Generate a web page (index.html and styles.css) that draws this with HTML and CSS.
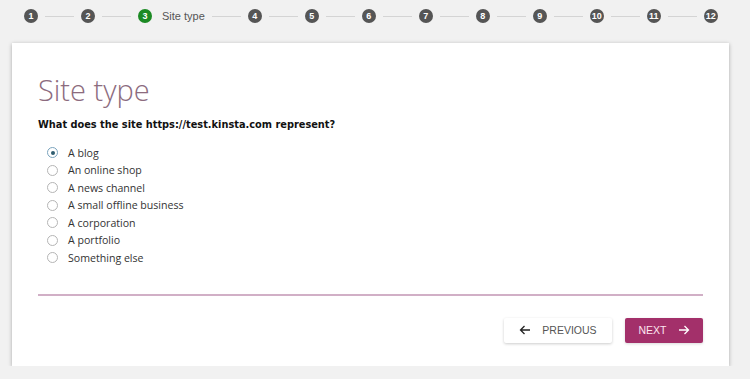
FILE: index.html
```html
<!DOCTYPE html>
<html lang="en">
<head>
    <meta charset="UTF-8">
    <meta name="viewport" content="width=device-width, initial-scale=1.0">
    <title>Site type</title>
    <link rel="stylesheet" href="styles.css">
</head>
<body>
    <!-- step bar -->
    <div class="steps">
        <span class="step">1</span><span class="line"></span>
        <span class="step">2</span><span class="line"></span>
        <span class="step step-active">3</span><span class="step-label">Site type</span><span class="line"></span>
        <span class="step">4</span><span class="line"></span>
        <span class="step">5</span><span class="line"></span>
        <span class="step">6</span><span class="line"></span>
        <span class="step">7</span><span class="line"></span>
        <span class="step">8</span><span class="line"></span>
        <span class="step">9</span><span class="line"></span>
        <span class="step">10</span><span class="line"></span>
        <span class="step">11</span><span class="line"></span>
        <span class="step">12</span>
    </div>

    <div class="card">
        <h1 class="title">Site type</h1>
        <p class="question">What does the site https://test.kinsta.com represent?</p>

        <ul class="options">
            <li class="option"><span class="radio radio-checked"></span>A blog</li>
            <li class="option"><span class="radio"></span>An online shop</li>
            <li class="option"><span class="radio"></span>A news channel</li>
            <li class="option"><span class="radio"></span>A small offline business</li>
            <li class="option"><span class="radio"></span>A corporation</li>
            <li class="option"><span class="radio"></span>A portfolio</li>
            <li class="option"><span class="radio"></span>Something else</li>
        </ul>

        <div class="divider"></div>

        <div class="actions">
            <button class="btn btn-prev">
                <svg width="12" height="12" viewBox="0 0 12 12"><path d="M11 6H1.5M5.5 2 1.5 6l4 4" fill="none" stroke="#222" stroke-width="1.3"/></svg>
                PREVIOUS
            </button>
            <button class="btn btn-next">
                NEXT
                <svg width="12" height="12" viewBox="0 0 12 12"><path d="M1 6h9.5M6.5 2l4 4-4 4" fill="none" stroke="#fff" stroke-width="1.3"/></svg>
            </button>
        </div>
    </div>
</body>
</html>
```

FILE: styles.css
```css
*{
    padding: 0px;
    margin: 0px;
    box-sizing: border-box;
}
body{
    background-color: #f1f1f1;
    font-family: "Open Sans", "Liberation Sans", sans-serif;
    color: #333;
}

/* step bar */
.steps{
    display: flex;
    align-items: flex-start;
    padding: 9px 0 0 24px;
    height: 43px;
}
.step{
    width: 14px;
    height: 14px;
    border-radius: 50%;
    background-color: #555;
    color: #fff;
    font-family: "Liberation Sans", sans-serif;
    font-size: 9px;
    font-weight: bold;
    line-height: 14px;
    text-align: center;
    flex: none;
}
.step-active{
    background-color: #1c8a24;
}
.step-label{
    font-family: "Liberation Sans", sans-serif;
    font-size: 11px;
    color: #555;
    line-height: 14px;
    margin-left: 10px;
}
.line{
    width: 29px;
    height: 1px;
    margin: 7px 7px 0;
    background-color: #d4d4d4;
    flex: none;
}

/* card */
.card{
    margin-left: 12px;
    width: 717px;
    height: 323px;
    background-color: #fff;
    box-shadow: 0 1px 4px rgba(0,0,0,0.3);
    padding: 31px 26px 0 26px;
}
.title{
    font-family: "Open Sans", sans-serif;
    font-weight: 300;
    font-size: 29px;
    line-height: 32px;
    color: #8c6b7e;
}
.question{
    margin-top: 12px;
    font-family: "DejaVu Sans", sans-serif;
    font-weight: bold;
    font-size: 9.8px;
    color: #111;
    line-height: 14px;
}
.options{
    list-style: none;
    margin-top: 12px;
    padding-left: 9px;
}
.option{
    display: flex;
    align-items: center;
    height: 17.5px;
    font-family: "Open Sans", sans-serif;
    font-size: 10.6px;
    color: #333;
}
.radio{
    width: 11px;
    height: 11px;
    border: 1px solid #b5b5b5;
    border-radius: 50%;
    margin-right: 10px;
    display: flex;
    align-items: center;
    justify-content: center;
}
.radio-checked{
    border-color: #7aa3bd;
}
.radio-checked::after{
    content: "";
    width: 4px;
    height: 4px;
    border-radius: 50%;
    background-color: #2f5d70;
}
.divider{
    margin-top: 27px;
    height: 2px;
    background-color: #d1afc6;
}
.actions{
    display: flex;
    justify-content: flex-end;
    gap: 13px;
    margin-top: 22px;
}
.btn{
    height: 25px;
    border: none;
    border-radius: 2px;
    font-family: "Liberation Sans", sans-serif;
    font-size: 10.5px;
    display: flex;
    align-items: center;
    justify-content: center;
    gap: 11px;
}
.btn-prev{
    width: 108px;
    background-color: #fff;
    color: #555;
    box-shadow: 0 1px 3px rgba(0,0,0,0.2);
}
.btn-next{
    width: 78px;
    background-color: #a3306a;
    color: #fde6f0;
    box-shadow: 0 1px 3px rgba(0,0,0,0.15);
}
```
